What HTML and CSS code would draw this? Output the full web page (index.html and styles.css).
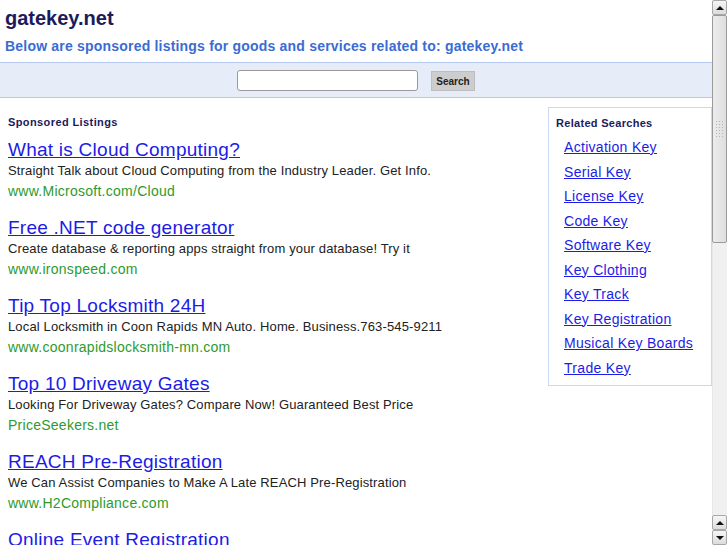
FILE: index.html
```html
<!DOCTYPE html>
<html lang="en">
<head>
    <meta charset="UTF-8">
    <title>gatekey.net</title>
    <link rel="stylesheet" href="styles.css">
</head>
<body>
    <div class="page">
        <div class="header">
            <h1>gatekey.net</h1>
            <h2>Below are sponsored listings for goods and services related to: gatekey.net</h2>
        </div>

        <div class="search-bar">
            <input type="text" class="search-input">
            <button class="search-btn">Search</button>
        </div>

        <div class="content">
            <div class="listings">
                <h3>Sponsored Listings</h3>

                <div class="listing">
                    <a href="#" class="listing-title">What is Cloud Computing?</a>
                    <div class="listing-desc">Straight Talk about Cloud Computing from the Industry Leader. Get Info.</div>
                    <div class="listing-url">www.Microsoft.com/Cloud</div>
                </div>
                <div class="listing">
                    <a href="#" class="listing-title">Free .NET code generator</a>
                    <div class="listing-desc">Create database &amp; reporting apps straight from your database! Try it</div>
                    <div class="listing-url">www.ironspeed.com</div>
                </div>
                <div class="listing">
                    <a href="#" class="listing-title">Tip Top Locksmith 24H</a>
                    <div class="listing-desc">Local Locksmith in Coon Rapids MN Auto. Home. Business.763-545-9211</div>
                    <div class="listing-url">www.coonrapidslocksmith-mn.com</div>
                </div>
                <div class="listing">
                    <a href="#" class="listing-title">Top 10 Driveway Gates</a>
                    <div class="listing-desc">Looking For Driveway Gates? Compare Now! Guaranteed Best Price</div>
                    <div class="listing-url">PriceSeekers.net</div>
                </div>
                <div class="listing">
                    <a href="#" class="listing-title">REACH Pre-Registration</a>
                    <div class="listing-desc">We Can Assist Companies to Make A Late REACH Pre-Registration</div>
                    <div class="listing-url">www.H2Compliance.com</div>
                </div>
                <div class="listing">
                    <a href="#" class="listing-title">Online Event Registration</a>
                    <div class="listing-desc">Simple, Secure Online Registration Try It Free Today</div>
                    <div class="listing-url">www.regonline.com</div>
                </div>
            </div>

            <div class="related">
                <h3>Related Searches</h3>
                <ul>
                    <li><a href="#">Activation Key</a></li>
                    <li><a href="#">Serial Key</a></li>
                    <li><a href="#">License Key</a></li>
                    <li><a href="#">Code Key</a></li>
                    <li><a href="#">Software Key</a></li>
                    <li><a href="#">Key Clothing</a></li>
                    <li><a href="#">Key Track</a></li>
                    <li><a href="#">Key Registration</a></li>
                    <li><a href="#">Musical Key Boards</a></li>
                    <li><a href="#">Trade Key</a></li>
                </ul>
            </div>
        </div>
    </div>

    <div class="scrollbar">
        <div class="sb-btn"><span class="arrow-up"></span></div>
        <div class="sb-thumb"><span class="grip"></span></div>
        <div class="sb-track"></div>
        <div class="sb-btn"><span class="arrow-up"></span></div>
        <div class="sb-btn"><span class="arrow-down"></span></div>
    </div>
</body>
</html>
```

FILE: styles.css
```css
html, body {
    height: 100%;
}
body {
    margin: 0;
    display: flex;
    overflow: hidden;
    font-family: "Liberation Sans", Arial, sans-serif;
    background: #fff;
}
.page {
    flex: 1;
    overflow: hidden;
}
.header {
    padding: 7px 5px 0 5px;
}
.header h1 {
    margin: 0;
    font-size: 20px;
    line-height: 23px;
    color: #1b1b5c;
}
.header h2 {
    margin: 6px 0 0 0;
    font-size: 14px;
    line-height: 20px;
    color: #3a6cd2;
    letter-spacing: 0.2px;
}
.search-bar {
    margin-top: 6px;
    height: 34px;
    background-color: #e6edf9;
    border-top: 1px solid #b4c7ee;
    border-bottom: 1px solid #b4c7ee;
    display: flex;
    justify-content: center;
    align-items: center;
    gap: 13px;
}
.search-input {
    width: 181px;
    height: 21px;
    box-sizing: border-box;
    border: 1px solid #999;
    border-radius: 3px;
    background: #fff;
    padding: 0 4px;
    margin: 0;
}
.search-btn {
    width: 44px;
    height: 20px;
    margin: 2px 0 0 0;
    padding: 0;
    background-color: #cdcdcd;
    border: 1px solid #bdbdbd;
    font-family: "Liberation Sans", Arial, sans-serif;
    font-weight: bold;
    font-size: 10px;
    color: #222;
}
.content {
    display: flex;
    align-items: flex-start;
    padding-left: 8px;
}
.listings {
    flex: 1;
}
h3 {
    margin: 0;
    font-size: 11px;
    line-height: 16px;
    color: #1b1b5c;
    letter-spacing: 0.4px;
}
.listings h3 {
    margin-top: 16px;
    margin-bottom: 9px;
}
.listing {
    margin-bottom: 16px;
}
.listing-title {
    display: block;
    font-size: 19px;
    line-height: 22px;
    color: #1c1ce6;
    letter-spacing: 0.25px;
}
.listing-desc {
    font-size: 13px;
    line-height: 20px;
    color: #222;
    letter-spacing: 0.14px;
}
.listing-url {
    font-size: 14px;
    line-height: 20px;
    color: #2e9a2e;
    letter-spacing: 0.26px;
}
.related {
    width: 164px;
    margin-top: 9px;
    border: 1px solid #cad8f6;
    padding: 7px 0 4px 7px;
    box-sizing: border-box;
    height: 279px;
}
.related h3 {
    letter-spacing: 0.3px;
}
.related ul {
    list-style: none;
    margin: 4px 0 0 0;
    padding-left: 8px;
}
.related li {
    font-size: 14px;
    line-height: 24.5px;
    letter-spacing: 0.3px;
}
.related a {
    color: #1c1ce6;
}
.scrollbar {
    width: 15px;
    height: 100%;
    display: flex;
    flex-direction: column;
    background: #f2f2f2;
}
.sb-btn {
    height: 15px;
    box-sizing: border-box;
    border: 1px solid #a8a8a8;
    border-radius: 2px;
    background: linear-gradient(#f6f6f6, #dcdcdc);
    display: flex;
    justify-content: center;
    align-items: center;
}
.arrow-up {
    width: 0;
    height: 0;
    border-left: 4px solid transparent;
    border-right: 4px solid transparent;
    border-bottom: 4px solid #111;
}
.arrow-down {
    width: 0;
    height: 0;
    border-left: 4px solid transparent;
    border-right: 4px solid transparent;
    border-top: 4px solid #111;
}
.sb-thumb {
    height: 228px;
    box-sizing: border-box;
    border: 1px solid #9a9a9a;
    border-radius: 2px;
    background: linear-gradient(90deg, #ececec, #dedede);
    display: flex;
    justify-content: center;
    padding-top: 104px;
}
.grip {
    width: 9px;
    height: 18px;
    background-image: radial-gradient(#b5b5b5 0.8px, transparent 1px);
    background-size: 3px 3px;
}
.sb-track {
    flex: 1;
    background: #f0f0f0;
    border-left: 1px dotted #ddd;
}
```
